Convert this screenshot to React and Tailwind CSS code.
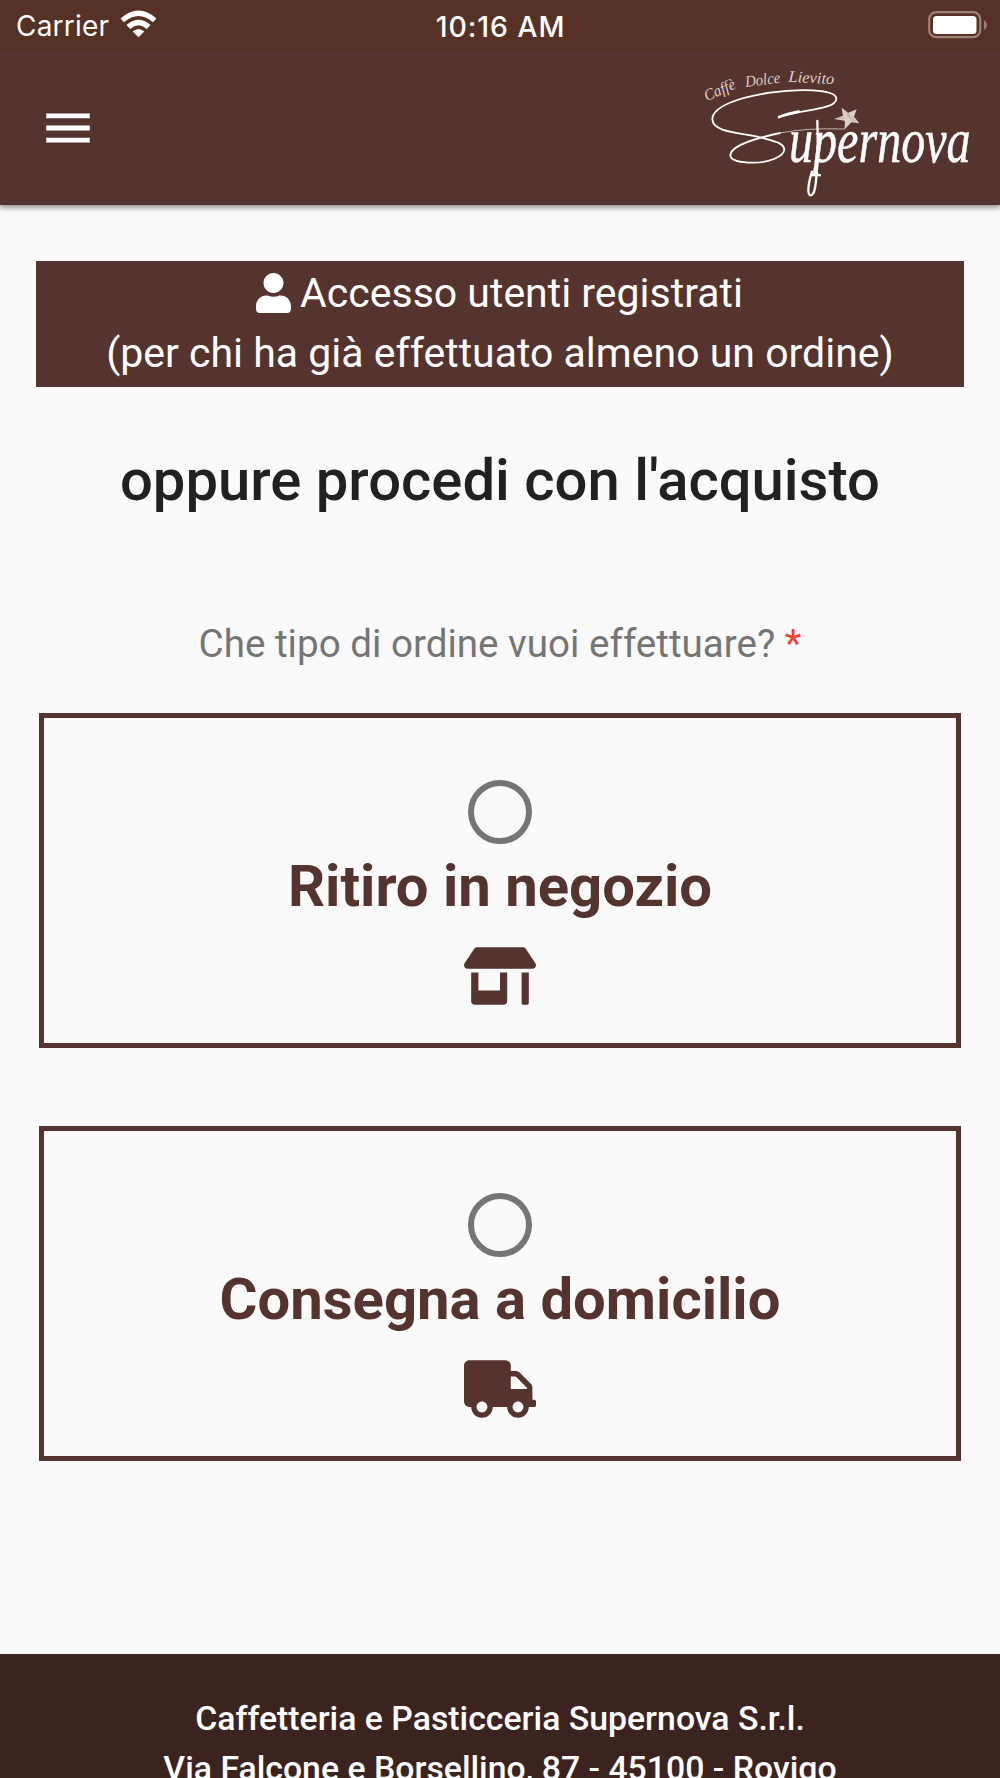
import React, { useState } from "react";
import { FaStoreAlt, FaTruck, FaUser } from "react-icons/fa";
import { MdMenu } from "react-icons/md";

const orderTypes = [
  { id: "pickup", label: "Ritiro in negozio", icon: FaStoreAlt },
  { id: "delivery", label: "Consegna a domicilio", icon: FaTruck },
];

const StatusBar = () => (
  <div className="relative z-10 grid h-[51px] grid-cols-3 items-center bg-[#563226] px-4 font-['Inter',sans-serif] text-[28px] leading-[51px] text-white">
    <div className="flex items-center gap-[11px]">
      <span className="pt-px tracking-[0.2px]">Carrier</span>
      <svg width="37" height="28" viewBox="0 0 37 28" className="mb-1">
        <path d="M0.5 8.5 Q18.5 -7.5 36.5 8.5 L33 12.3 Q18.5 -0.5 4 12.3 Z" fill="white" />
        <path d="M6.5 15 Q18.5 4.5 30.5 15 L26.8 18.9 Q18.5 11.8 10.2 18.9 Z" fill="white" />
        <path d="M12.7 21.5 Q18.5 16.5 24.3 21.5 L18.5 27.3 Z" fill="white" />
      </svg>
    </div>
    <span className="pl-px text-center text-[28.5px] font-medium tracking-[0.9px]">10:16 AM</span>
    <svg width="59" height="28" viewBox="0 0 59 28" className="-mr-[3px] mb-[2px] justify-self-end">
      <rect x="1.2" y="1.2" width="51" height="25" rx="7" fill="none" stroke="#9d8278" strokeWidth="2.2" />
      <rect x="5" y="5" width="43.5" height="18" rx="3.5" fill="white" />
      <path d="M56 9 Q59 11 59 14 Q59 17 56 19 Z" fill="#9d8278" />
    </svg>
  </div>
);

const Logo = () => (
  <svg width="310" height="154" viewBox="0 3 930 462" aria-label="Supernova" className="overflow-visible font-['Liberation_Serif',serif] italic">
    <g fill="#dccfca" fontSize="48">
      <text transform="translate(50 154) rotate(-24)" textLength="98" lengthAdjust="spacingAndGlyphs">Caffè</text>
      <text transform="translate(167 111) rotate(-7)" textLength="106" lengthAdjust="spacingAndGlyphs">Dolce</text>
      <text transform="translate(295 95) rotate(3)" textLength="137" lengthAdjust="spacingAndGlyphs">Lievito</text>
    </g>
    <g fill="none" stroke="white" strokeLinecap="round">
      <path strokeWidth="5.5" d="M267 201 C330 178 438 180 439 146 C438 116 320 116 240 128 C145 142 67 170 67 208 C68 250 165 248 222 265 C259 275 281 280 283 298 C282 322 232 338 192 338 C153 338 121 333 121 315 C122 289 195 265 270 249" />
      <path strokeWidth="8" d="M267 201 Q290 192 326 185" />
      <path strokeWidth="2.5" stroke="#d4c5bf" d="M270 249 Q350 233 464 237 L466 223" />
    </g>
    <path fill="#dccfca" d="M455 173 L475 188 L500 178 L492 200 L508 220 L484 217 L466 236 L464 212 L432 207 L459 197 Z" />
    <path stroke="#a38b83" strokeWidth="2" d="M463 180 L499 216 M469 192 L490 215 M444 207 L463 203" />
    <text x="297" y="337" fill="white" stroke="white" strokeWidth="1.5" fontSize="190" textLength="545" lengthAdjust="spacingAndGlyphs">upernova</text>
    {/* loop under the p */}
    <path fill="none" stroke="white" strokeWidth="7" strokeLinecap="round" d="M382 213 C384 270 383 330 380 370 C377 412 373 436 362 436 C350 434 355 400 366 365" />
  </svg>
);

const Header = () => (
  <header className="relative flex h-[154px] items-center justify-between bg-[#55332f] pl-[39px] shadow-[0_1px_6px_1px_rgba(0,0,0,0.5)]">
    <button className="text-white" aria-label="Menu">
      <MdMenu size={58} />
    </button>
    <Logo />
  </header>
);

const OrderOption = ({ option, checked, onSelect }) => {
  const Icon = option.icon;

  return (
    <button
      role="radio"
      aria-checked={checked}
      onClick={() => onSelect(option.id)}
      className="flex h-[335px] w-full flex-col items-center border-5 border-[#55332f] pt-[61.5px] text-[#55332f]"
    >
      <span className="flex size-16 shrink-0 items-center justify-center rounded-full border-6 border-[#757575]">
        {checked && <span className="size-8 rounded-full bg-[#55332f]" />}
      </span>
      <span className="mt-[7.5px] text-[58px] font-bold leading-[70px]">{option.label}</span>
      <Icon className="mt-[26px] h-[58px] w-[72px]" />
    </button>
  );
};

const App = () => {
  const [orderType, setOrderType] = useState(null);

  return (
    <div className="flex h-[1778px] flex-col overflow-hidden bg-[#fafafa] font-['Roboto',sans-serif]">
      <StatusBar />
      <Header />
      <main className="flex-1 px-9 pt-14 text-center">
        <a className="block h-[126px] bg-[#55332f] pt-[2px] text-[41px] leading-[60px] text-white">
          <span className="flex items-center justify-center gap-[9px] pr-px">
            <FaUser className="h-10 w-[35px]" />
            <span>Accesso utenti registrati</span>
          </span>
          <span className="block">(per chi ha già effettuato almeno un ordine)</span>
        </a>
        <h2 className="mt-[58px] text-[58px] font-medium leading-[70px] text-[#212121]">
          oppure procedi con l'acquisto
        </h2>
        <p className="mt-[104px] text-[38.6px] leading-[50px] text-[#757575]">
          Che tipo di ordine vuoi effettuare? <span className="text-[#f44336]">*</span>
        </p>
        <div role="radiogroup" className="mt-11 flex flex-col gap-[78px] px-[3px]">
          {orderTypes.map((option) => (
            <OrderOption
              key={option.id}
              option={option}
              checked={orderType === option.id}
              onSelect={setOrderType}
            />
          ))}
        </div>
      </main>
      <footer className="h-[124px] shrink-0 overflow-hidden bg-[#3b2420] pt-10 text-center text-[33.8px] font-medium leading-[50px] text-white">
        <p>Caffetteria e Pasticceria Supernova S.r.l.</p>
        <p>Via Falcone e Borsellino, 87 - 45100 - Rovigo</p>
      </footer>
    </div>
  );
};

export default App;
